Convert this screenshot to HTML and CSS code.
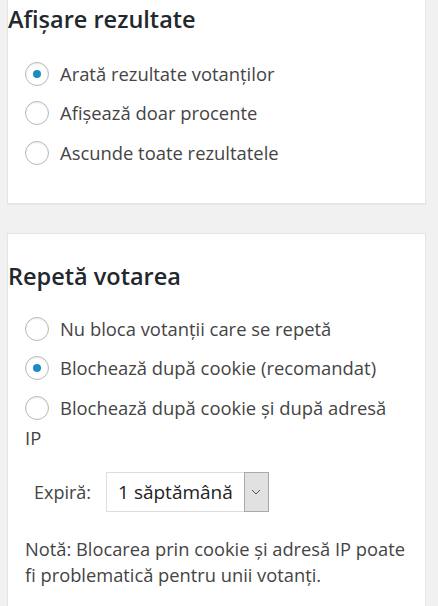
FILE: index.html
```html
<!DOCTYPE html>
<html lang="ro">
<head>
<meta charset="utf-8">
<title>Setări vot</title>
<link rel="stylesheet" href="styles.css">
</head>
<body>
<section class="card card-results">
  <h2 class="card-title">Afișare rezultate</h2>
  <ul class="options">
    <li class="option"><span class="radio is-checked"></span><span class="option-text">Arată rezultate votanților</span></li>
    <li class="option"><span class="radio"></span><span class="option-text">Afișează doar procente</span></li>
    <li class="option"><span class="radio"></span><span class="option-text">Ascunde toate rezultatele</span></li>
  </ul>
</section>
<section class="card card-repeat">
  <h2 class="card-title">Repetă votarea</h2>
  <ul class="options">
    <li class="option"><span class="radio"></span><span class="option-text">Nu bloca votanții care se repetă</span></li>
    <li class="option"><span class="radio is-checked"></span><span class="option-text">Blochează după cookie (recomandat)</span></li>
    <li class="option option-wrap"><span class="radio"></span><span class="option-text">Blochează după cookie și după adresă IP</span></li>
  </ul>
  <div class="expire">
    <span class="expire-label">Expiră:</span>
    <div class="select">
      <span class="select-value">1 săptămână</span>
      <span class="select-arrow"><svg width="10" height="6" viewBox="0 0 10 6"><path d="M1 1l4 4 4-4" fill="none" stroke="#555" stroke-width="1"/></svg></span>
    </div>
  </div>
  <p class="note">Notă: Blocarea prin cookie și adresă IP poate fi problematică pentru unii votanți.</p>
</section>
</body>
</html>
```
FILE: styles.css
```css
html, body {
  margin: 0;
  padding: 0;
  background: #f1f1f1;
}
body {
  font-family: "Open Sans", "Noto Sans", sans-serif;
  color: #444;
  overflow: hidden;
  height: 606px;
}
.card {
  width: 419px;
  box-sizing: border-box;
  margin-left: 7px;
  background: #fff;
  border: 1px solid #e5e5e5;
  box-shadow: 0 1px 1px rgba(0,0,0,.04);
}
.card-results {
  border-top: 0;
  height: 204px;
  padding-top: 3px;
}
.card-repeat {
  margin-top: 29px;
  padding-top: 26px;
  height: 373px;
  border-bottom: 0;
}
.card-title {
  margin: 0;
  font-size: 23.5px;
  font-weight: 600;
  color: #23282d;
  line-height: 32px;
}
.options {
  list-style: none;
  margin: 0;
  padding: 0 30px 0 17px;
}
.card-results .options { margin-top: 19px; }
.card-repeat .options { margin-top: 17px; }
.option {
  display: flex;
  align-items: flex-start;
  gap: 11px;
  font-size: 18.4px;
  line-height: 30px;
  padding: 4.75px 0;
}
.radio {
  flex: none;
  width: 24px;
  height: 24px;
  margin-top: 3px;
  box-sizing: border-box;
  border: 1px solid #b4b9be;
  border-radius: 50%;
  background: #fff;
  box-shadow: inset 0 1px 2px rgba(0,0,0,.07);
  display: flex;
  align-items: center;
  justify-content: center;
}
.radio.is-checked::before {
  content: "";
  width: 8px;
  height: 8px;
  border-radius: 50%;
  background: #1e8cbe;
}
.option-wrap { display: block; }
.option-wrap .radio { display: inline-flex; vertical-align: -5px; margin: 0 11px 0 0; }
.expire {
  display: flex;
  align-items: center;
  gap: 15px;
  margin: 14px 0 0 26px;
  font-size: 18px;
}
.select {
  display: flex;
  height: 40px;
  box-sizing: border-box;
  border: 1px solid #ddd;
  background: #fff;
}
.select-value {
  padding: 0 11px;
  line-height: 38px;
  font-size: 19px;
  color: #222;
}
.select-arrow {
  width: 25px;
  box-sizing: border-box;
  border: 1px solid #aaa;
  margin: -1px -1px -1px 0;
  background: #e1e1e1;
  display: flex;
  align-items: center;
  justify-content: center;
}
.note {
  margin: 24px 0 0;
  padding: 0 12px 0 17px;
  font-size: 18.3px;
  line-height: 26px;
}
```
